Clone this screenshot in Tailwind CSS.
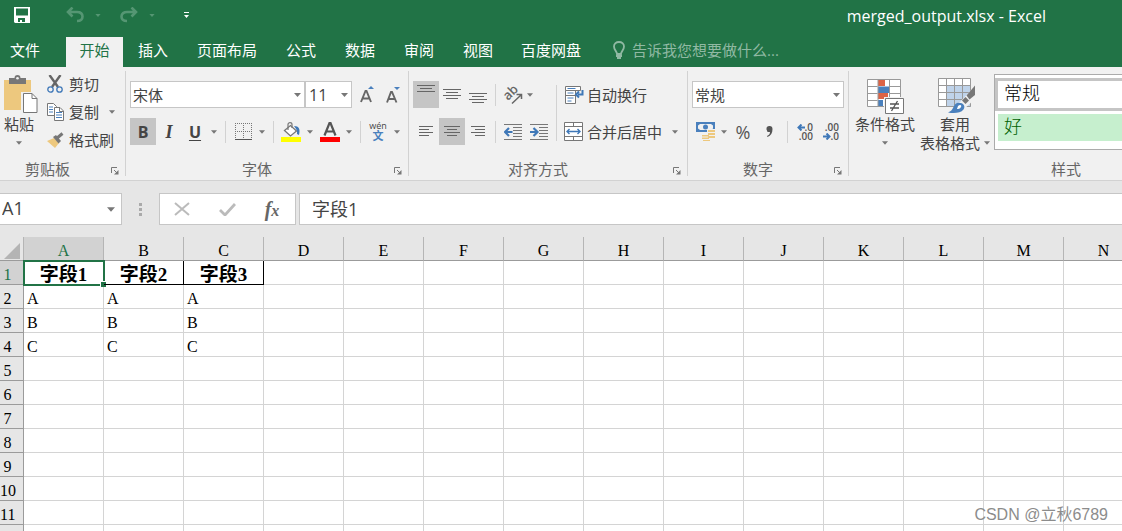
<!DOCTYPE html>
<html lang="zh-CN">
<head>
<meta charset="utf-8">
<meta name="viewport" content="width=device-width, initial-scale=1">
<title>merged_output.xlsx - Excel</title>
<script src="https://cdn.jsdelivr.net/npm/@tailwindcss/browser@4"></script>
</head>
<body class="relative flex h-screen flex-col overflow-hidden bg-white font-['Open_Sans','Noto_Sans_CJK_SC',sans-serif] text-[15px] leading-5 text-[#444444]">

<svg class="hidden" aria-hidden="true">
  <symbol id="caret" viewBox="0 0 7 4"><path d="M0 0h7L3.500 4z" fill="currentColor"/></symbol>
  <symbol id="launch" viewBox="0 0 8 8"><path d="M.5 6V.5H6M3 3l3.500 3.500" fill="none" stroke="#777"/><path d="M7.500 3v4.500H3z" fill="#777"/></symbol>
</svg>

<header class="shrink-0 bg-[#217346] text-white">
  <div class="flex h-[37px] items-center">
    <div class="flex flex-1 items-center pb-[7px]">
      <button class="ml-[13px] flex h-6 w-[18px] items-center justify-center" aria-label="保存">
        <svg class="h-4 w-4" viewBox="0 0 16 16"><path fill="#fff" fill-rule="evenodd" d="M0 0h16v16H1l-1-1zM2 1.500v7h12v-7zM4 11v4h2v-2h2v2h3v-4z"/></svg>
      </button>
      <button class="ml-[34px] flex h-6 w-5 items-center justify-center text-[#559673]" aria-label="撤消">
        <svg class="h-4 w-[18px]" viewBox="0 0 18 16"><path d="M6.500.5 2 5l4.500 4.500M2 5h9c3 0 5.500 1.500 5.500 4.500S14 14 11 14" fill="none" stroke="currentColor" stroke-width="2.600"/></svg>
      </button>
      <button class="ml-px flex h-6 w-6 items-center justify-center text-[#559673]" aria-label="撤消选项"><svg class="h-[3px] w-[6px]"><use href="#caret"/></svg></button>
      <button class="ml-[9px] flex h-6 w-5 items-center justify-center text-[#559673]" aria-label="恢复">
        <svg class="h-4 w-[18px]" viewBox="0 0 18 16"><path d="M11.500.5 16 5l-4.500 4.500M16 5H7C4 5 1.500 6.500 1.500 9.500S4 14 7 14" fill="none" stroke="currentColor" stroke-width="2.600"/></svg>
      </button>
      <button class="ml-px flex h-6 w-6 items-center justify-center text-[#559673]" aria-label="恢复选项"><svg class="h-[3px] w-[6px]"><use href="#caret"/></svg></button>
      <button class="ml-[14px] flex h-6 w-4 items-center justify-center" aria-label="自定义快速访问工具栏">
        <svg class="h-[6px] w-[5px]" viewBox="0 0 5 6"><path d="M0 0h5v1H0zM0 3h5L2.500 6z" fill="#fff"/></svg>
      </button>
    </div>
    <h1 class="pr-[76px] pb-[6px] text-base leading-5">merged_output.xlsx - Excel</h1>
  </div>
  <nav class="flex h-[30px] items-center pb-[4px]" aria-label="功能区选项卡">
    <button class="w-[50px]">文件</button>
    <button class="ml-4 -mb-[4px] h-[30px] w-[57px] bg-[#f1f1f1] pb-[4px] text-[#217346]">开始</button>
    <div class="ml-[15px] flex gap-[29px]">
      <button>插入</button>
      <button>页面布局</button>
      <button>公式</button>
      <button>数据</button>
      <button>审阅</button>
      <button>视图</button>
      <button class="-ml-px">百度网盘</button>
    </div>
    <label class="ml-8 flex items-center gap-[7px]">
      <svg class="h-[18px] w-3" viewBox="0 0 12 18" aria-hidden="true"><path d="M4 13c0-3-3-3.500-3-7.500C1 2.800 3.200 1 6 1s5 1.800 5 4.500c0 4-3 4.500-3 7.500z" fill="none" stroke="#90b9a3" stroke-width="1.800"/><path d="M3 14h6v2H8v2H4v-2H3z" fill="#90b9a3"/></svg>
      <input class="w-[160px] bg-transparent placeholder:text-[#90b9a3] placeholder:opacity-100 focus:outline-none" placeholder="告诉我您想要做什么..." aria-label="告诉我您想要做什么">
    </label>
  </nav>
</header>

<section class="flex h-[114px] shrink-0 border-b border-[#d2d2d2] bg-[#f1f1f1] pt-1 pb-[4px]" aria-label="开始">

  <!-- Clipboard -->
  <div class="flex w-[126px] shrink-0 flex-col border-r border-[#d2d2d2]">
    <div class="flex h-[88px] shrink-0">
      <button class="flex w-[38px] flex-col items-center pt-[4px]">
        <svg class="h-[39px] w-[34px] translate-x-[2px]" viewBox="0 0 34 39" aria-hidden="true"><path fill="#edc87e" d="M0 5h27v30H0z"/><path fill="#777" d="M5 3h5.500a3 3 0 0 1 6 0H22v6H5z"/><circle cx="13.500" cy="3.200" r="1.300" fill="#f1f1f1"/><path d="M18.500 18.500h9l6 6v13h-15z" fill="#fff" stroke="#f1f1f1" stroke-width="3"/><path d="M19.500 18.500h8.500l5 5v14H19.500z" fill="#fff" stroke="#777"/><path d="M28 18.500v5h5" fill="none" stroke="#777"/></svg>
        <span>粘贴</span>
        <svg class="mt-[7px] h-[4px] w-[6px] text-[#777]"><use href="#caret"/></svg>
      </button>
      <div class="flex flex-col gap-[2px] pl-[9px]">
        <button class="flex h-[26px] items-center gap-[6px]"><svg class="h-[18px] w-4" viewBox="0 0 16 18" aria-hidden="true"><path d="M2.500 0 11 12M13.500 0 5 12" stroke="#666" stroke-width="2.400"/><circle cx="3.500" cy="14.500" r="2.700" fill="#f1f1f1" stroke="#3f78b8" stroke-width="1.300"/><circle cx="12.500" cy="14.500" r="2.700" fill="#f1f1f1" stroke="#3f78b8" stroke-width="1.300"/></svg>剪切</button>
        <div class="flex h-[26px] items-center"><button class="flex items-center gap-[5px]"><svg class="h-[18px] w-[17px]" viewBox="0 0 17 18" aria-hidden="true"><path d="M.5.5h6l3 3v9h-9z" fill="#fff" stroke="#777"/><path d="M2 4h4M2 6.500h4M2 9h4" stroke="#4a80bd"/><path d="M7.500 4.500h5.500l3.500 3.500v9.500h-9z" fill="#fff" stroke="#777"/><path d="M12.500 5v3.500H16" fill="none" stroke="#777"/><path d="M9 9.500h6M9 12h6M9 14.500h6" stroke="#4a80bd"/></svg>复制</button><button class="ml-[10px] text-[#777]" aria-label="复制选项"><svg class="h-[4px] w-[6px]"><use href="#caret"/></svg></button></div>
        <button class="flex h-[26px] items-center gap-[5px]"><svg class="h-4 w-[17px]" viewBox="0 0 17 16" aria-hidden="true"><path d="m0 9 7-3 5 5-4 5z" fill="#edc87e"/><path d="m6 5 3-2 5 6-2.500 2.500z" fill="#777"/><path d="m9.500 6.500 6-5" stroke="#777" stroke-width="3"/></svg>格式刷</button>
      </div>
    </div>
    <div class="flex h-5 shrink-0 items-center text-[#666]"><span class="flex-1 pl-[25px]">剪贴板</span><button class="mr-[6px]" aria-label="剪贴板设置"><svg class="mt-1 h-2 w-2"><use href="#launch"/></svg></button></div>
  </div>

  <!-- Font -->
  <div class="flex w-[283px] shrink-0 flex-col border-r border-[#d2d2d2]">
    <div class="flex h-[88px] shrink-0 flex-col gap-[10px] pt-[10px] pl-1">
      <div class="flex h-[27px]">
        <div class="relative w-[175px]"><select class="h-[27px] w-full appearance-none border border-[#c6c6c6] bg-white pl-[2px]" aria-label="字体"><option>宋体</option></select><svg class="pointer-events-none absolute top-[12px] right-[4px] h-[4px] w-[7px] text-[#777]"><use href="#caret"/></svg></div>
        <div class="relative w-[47px]"><select class="h-[27px] w-full appearance-none border border-[#c6c6c6] bg-white pl-[3px] text-base" aria-label="字号"><option>11</option></select><svg class="pointer-events-none absolute top-[12px] right-[4px] h-[4px] w-[7px] text-[#777]"><use href="#caret"/></svg></div>
        <button class="ml-[2px] flex w-[26px] items-center justify-center" aria-label="增大字号"><svg class="h-[18px] w-[15px]" viewBox="0 0 15 18"><path d="M1 16 5.500 5h1L11 16M2.700 12.500h6.600" fill="none" stroke="#666" stroke-width="1.900"/><path d="M8 3h6l-3-3z" fill="#4a80bd"/></svg></button>
        <button class="flex w-[26px] items-center justify-center" aria-label="减小字号"><svg class="h-[18px] w-[15px]" viewBox="0 0 15 18"><path d="M1 16.500 5 6h1l4.500 10.500M2.600 13h6.300" fill="none" stroke="#666" stroke-width="1.900"/><path d="M8 1h6l-3 3z" fill="#4a80bd"/></svg></button>
      </div>
      <div class="flex h-[27px] items-center text-[#444]">
        <button class="h-[27px] w-[26px] bg-[#c5c5c5] text-base font-bold" aria-label="加粗">B</button>
        <button class="w-[26px] font-['Liberation_Serif',serif] text-lg font-bold italic" aria-label="倾斜">I</button>
        <button class="w-[26px] text-base font-bold text-[#444] underline underline-offset-2" aria-label="下划线">U</button>
        <button class="flex w-3 justify-center text-[#777]" aria-label="下划线选项"><svg class="h-[4px] w-[6px]"><use href="#caret"/></svg></button>
        <span class="mx-[5px] h-[22px] w-px bg-[#d2d2d2]"></span>
        <button class="flex w-6 justify-center" aria-label="边框"><svg class="h-[17px] w-[17px]" viewBox="0 0 17 17"><path d="M0 .5h17M0 8.500h17M.5 0v16M8.500 0v16M16.500 0v16" stroke="#777" stroke-dasharray="1 1" fill="none"/><path d="M0 16.500h17" stroke="#555"/></svg></button>
        <button class="flex w-[14px] justify-center text-[#777]" aria-label="边框选项"><svg class="h-[4px] w-[6px]"><use href="#caret"/></svg></button>
        <span class="mx-1 h-[22px] w-px bg-[#d2d2d2]"></span>
        <button class="flex w-[26px] justify-center" aria-label="填充颜色"><svg class="h-5 w-5" viewBox="0 0 20 20"><path d="M0 15h20v5H0z" fill="#ff0"/><path d="m3.500 8.500 6-5 6 5.500-6 5z" fill="#fff" stroke="#777" stroke-width="1.300"/><path d="M7 8V2.500C7 0 11 0 11 2.500V6" fill="none" stroke="#777" stroke-width="1.200"/><path d="M13 4c5 0 6.500 3 5 9l-2-1c.500-4-1-5-3-8z" fill="#3f78b8"/></svg></button>
        <button class="flex w-3 justify-center text-[#777]" aria-label="填充颜色选项"><svg class="h-[4px] w-[6px]"><use href="#caret"/></svg></button>
        <button class="flex w-7 justify-center" aria-label="字体颜色"><svg class="h-5 w-5" viewBox="0 0 20 20"><path d="m4.500 13.500 5-12.500h1l5 12.500M6.500 9.500h7" fill="none" stroke="#555" stroke-width="2.200"/><path d="M0 15h20v5H0z" fill="red"/></svg></button>
        <button class="flex w-[10px] justify-center text-[#777]" aria-label="字体颜色选项"><svg class="h-[4px] w-[6px]"><use href="#caret"/></svg></button>
        <span class="mx-[6px] h-[22px] w-px bg-[#d2d2d2]"></span>
        <button class="flex w-[22px] flex-col items-center" aria-label="拼音"><span class="text-[9px] leading-[8px]">wén</span><span class="text-[11px] leading-[12px] font-bold text-[#4a80bd]">文</span></button>
        <button class="flex w-4 justify-center text-[#777]" aria-label="拼音选项"><svg class="h-[4px] w-[6px]"><use href="#caret"/></svg></button>
      </div>
    </div>
    <div class="flex h-5 shrink-0 items-center text-[#666]"><span class="flex-1 pr-[6px] text-center">字体</span><button class="mr-[6px]" aria-label="字体设置"><svg class="mt-1 h-2 w-2"><use href="#launch"/></svg></button></div>
  </div>

  <!-- Alignment -->
  <div class="flex w-[279px] shrink-0 flex-col border-r border-[#d2d2d2]">
    <div class="flex h-[88px] shrink-0 pt-[10px] pl-1">
      <div class="flex w-[143px] flex-col gap-[10px]">
        <div class="flex h-[27px] items-center">
          <button class="flex h-[27px] w-[26px] justify-center bg-[#c5c5c5] pt-1" aria-label="顶端对齐"><svg class="h-[8px] w-[18px]" viewBox="0 0 18 8"><path d="M0 .5h18M3 3.500h12M0 6.500h18" stroke="#666"/></svg></button>
          <button class="flex w-[26px] justify-center" aria-label="垂直居中"><svg class="h-[11px] w-[18px]" viewBox="0 0 18 11"><path d="M0 .5h18M3 3.500h12M0 6.500h18M3 9.500h12" stroke="#666"/></svg></button>
          <button class="flex h-[27px] w-[26px] items-end justify-center pb-[4px]" aria-label="底端对齐"><svg class="h-[11px] w-[18px]" viewBox="0 0 18 11"><path d="M0 .5h18M3 3.500h12M0 6.500h18M3 9.500h12" stroke="#666"/></svg></button>
          <span class="mx-1 h-[22px] w-px bg-[#d2d2d2]"></span>
          <button class="flex w-[26px] justify-center" aria-label="方向"><svg class="h-[18px] w-5 overflow-visible" viewBox="0 0 20 18"><text x="0" y="0" transform="translate(5 15) rotate(-45)" font-family="Open Sans" font-size="13" font-weight="600" fill="#666">ab</text><path d="M9 17.500 18 9M13.500 8.500h5V13" fill="none" stroke="#666" stroke-width="1.500"/></svg></button>
          <button class="flex w-2 justify-center text-[#777]" aria-label="方向选项"><svg class="h-[4px] w-[6px]"><use href="#caret"/></svg></button>
        </div>
        <div class="flex h-[27px] items-center">
          <button class="flex w-[26px] justify-center" aria-label="左对齐"><svg class="h-[11px] w-[14px]" viewBox="0 0 14 11"><path d="M0 .5h14M0 3.500h10M0 6.500h14M0 9.500h10" stroke="#666"/></svg></button>
          <button class="flex h-[27px] w-[26px] items-center justify-center bg-[#c5c5c5]" aria-label="居中"><svg class="h-[11px] w-4" viewBox="0 0 16 11"><path d="M0 .5h16M3 3.500h10M0 6.500h16M3 9.500h10" stroke="#666"/></svg></button>
          <button class="flex w-[26px] justify-center" aria-label="右对齐"><svg class="h-[11px] w-[14px]" viewBox="0 0 14 11"><path d="M0 .5h14M4 3.500h10M0 6.500h14M4 9.500h10" stroke="#666"/></svg></button>
          <span class="mx-1 h-[22px] w-px bg-[#d2d2d2]"></span>
          <button class="flex w-[26px] justify-center" aria-label="减少缩进量"><svg class="h-4 w-[18px]" viewBox="0 0 18 16"><path d="M0 .5h18M9 3.500h9M9 6.500h9M9 9.500h9M9 12.500h9M0 15.500h18" stroke="#777"/><path d="M8.500 8H2M5 4 1 8l4 4" fill="none" stroke="#3f78b8" stroke-width="2.200"/></svg></button>
          <button class="flex w-[26px] justify-center" aria-label="增加缩进量"><svg class="h-4 w-[18px]" viewBox="0 0 18 16"><path d="M0 .5h18M9 3.500h9M9 6.500h9M9 9.500h9M9 12.500h9M0 15.500h18" stroke="#777"/><path d="M0 8h6.500M3.500 4l4 4-4 4" fill="none" stroke="#3f78b8" stroke-width="2.200"/></svg></button>
        </div>
      </div>
      <span class="mt-1 h-[56px] w-px bg-[#d2d2d2]"></span>
      <div class="flex flex-col gap-[10px] pl-[7px]">
        <button class="flex h-[27px] items-center gap-[3px]"><svg class="h-[18px] w-5" viewBox="0 0 20 18" aria-hidden="true"><path d="M1.500.5h15v4h-15zM1.500 4.500V17.500h10v-13M1.500 9.500h10" fill="#fff" stroke="#777"/><path d="M3.500 2.500h8M3.500 7h6M3.500 12h6M3.500 15h4" stroke="#4a80bd"/><path d="M18.500 4v4.500H14M15 5.500l-3 3 3 3" fill="none" stroke="#3f78b8" stroke-width="2"/></svg>自动换行</button>
        <div class="flex h-[27px] items-center"><button class="flex items-center gap-[4px]"><svg class="h-[19px] w-[19px]" viewBox="0 0 19 19" aria-hidden="true"><path d="M.5.5h18v18H.5zM.5 4.500h18M.5 14.500h18M9.500.5v4M9.500 14.500v4" fill="#fff" stroke="#777"/><path d="M3 9.500h13M5.500 7 3 9.500 5.500 12M13.500 7 16 9.500 13.500 12" fill="none" stroke="#3f78b8" stroke-width="1.400"/></svg>合并后居中</button><button class="ml-[10px] text-[#777]" aria-label="合并选项"><svg class="h-[4px] w-[6px]"><use href="#caret"/></svg></button></div>
      </div>
    </div>
    <div class="flex h-5 shrink-0 items-center text-[#666]"><span class="flex-1 pr-[6px] text-center">对齐方式</span><button class="mr-[6px]" aria-label="对齐设置"><svg class="mt-1 h-2 w-2"><use href="#launch"/></svg></button></div>
  </div>

  <!-- Number -->
  <div class="flex w-[161px] shrink-0 flex-col border-r border-[#d2d2d2]">
    <div class="flex h-[88px] shrink-0 flex-col gap-[10px] px-1 pt-[10px]">
      <div class="relative h-[27px]"><select class="h-[27px] w-full appearance-none border border-[#c6c6c6] bg-white pl-[2px]" aria-label="数字格式"><option>常规</option></select><svg class="pointer-events-none absolute top-[12px] right-[4px] h-[4px] w-[7px] text-[#777]"><use href="#caret"/></svg></div>
      <div class="flex h-[27px] items-center text-[#555]">
        <button class="flex w-[26px] justify-center" aria-label="会计数字格式"><svg class="h-[19px] w-[19px]" viewBox="0 0 19 19"><path d="M0 0h19v10H0z" fill="#4a80bd"/><path d="M2 3.500 4 2h11l2 1.500v3L15 8H4L2 6.500z" fill="#f1f1f1"/><circle cx="9.500" cy="5" r="2.500" fill="#4a80bd"/><path d="M11 7h8v9h-8zM6 12h8v7H6z" fill="#f1f1f1"/><path d="M12 8h7v2h-7zm0 3h7v2h-7zm0 3h7v2h-7zM6 13h7v1.500H6zm0 2.500h7V17H6zm1 2.500h7v1H7z" fill="#edc87e"/></svg></button>
        <button class="flex w-3 justify-center text-[#777]" aria-label="会计格式选项"><svg class="h-[4px] w-[6px]"><use href="#caret"/></svg></button>
        <button class="w-[26px] text-lg leading-5" aria-label="百分比样式">%</button>
        <button class="flex w-[26px] justify-center" aria-label="千位分隔样式"><svg class="h-[11px] w-[7px]" viewBox="0 0 7 11"><path d="M1 10c2-1 3-2 3-4A3 3 0 1 1 6.500 3c0 4-1.500 6.500-5 8z" fill="#555"/></svg></button>
        <span class="mr-1 ml-[5px] h-[22px] w-px bg-[#d2d2d2]"></span>
        <button class="flex w-[26px] flex-col items-end pr-[5px] text-[10px] leading-[9px] font-semibold" aria-label="增加小数位数"><span class="flex items-center"><svg class="h-[7px] w-2" viewBox="0 0 8 7"><path d="M8 3.500H2M4.500.5l-3 3 3 3" fill="none" stroke="#3f78b8" stroke-width="2"/></svg>.0</span><span>.00</span></button>
        <button class="flex w-[26px] flex-col items-end pr-[5px] text-[10px] leading-[9px] font-semibold" aria-label="减少小数位数"><span>.00</span><span class="flex items-center"><svg class="h-[7px] w-2" viewBox="0 0 8 7"><path d="M0 3.500h6M3.500.5l3 3-3 3" fill="none" stroke="#3f78b8" stroke-width="2"/></svg>.0</span></button>
      </div>
    </div>
    <div class="flex h-5 shrink-0 items-center text-[#666]"><span class="flex-1 pr-[6px] text-center">数字</span><button class="mr-[6px]" aria-label="数字设置"><svg class="mt-1 h-2 w-2"><use href="#launch"/></svg></button></div>
  </div>

  <!-- Styles -->
  <div class="flex min-w-0 flex-1 flex-col">
    <div class="flex h-[88px] shrink-0">
      <button class="ml-[3px] flex w-[66px] shrink-0 flex-col items-center pt-[8px]">
        <svg class="h-[35px] w-[37px]" viewBox="0 0 37 35" aria-hidden="true"><path d="M.5.5h33v27H.5z" fill="#fff"/><path d="M11 1h7v6h-7zM11 14h10v6H11z" fill="#dc6345"/><path d="M11 7.500h11V14H11zM11 21h5v6h-5z" fill="#4a80bd"/><path d="M.5.500h33v27H.5zM.5 7.500h10M.5 14.500h10M.5 21.500h10M22.500 7.500h11M22.500 14.500h11M11 .5v27M22.500 .5v27" fill="none" stroke="#999"/><path d="M17 18h20v17H17z" fill="#f1f1f1"/><path d="M18.500 19.500h18v15h-18z" fill="#fff" stroke="#777"/><path d="M23 25h9M23 29h9M30.500 22l-6 10" stroke="#555" stroke-width="1.300"/></svg>
        <span>条件格式</span>
        <svg class="mt-[7px] h-[4px] w-[6px] text-[#777]"><use href="#caret"/></svg>
      </button>
      <button class="ml-px flex w-[72px] shrink-0 flex-col items-center pt-[7px]">
        <svg class="ml-[2px] h-9 w-[37px]" viewBox="0 0 37 36" aria-hidden="true"><path d="M.5.500h32v28H.5z" fill="#fff"/><path d="M9 8h24v21H9z" fill="#bfd3ea"/><path d="M.5.500h32v28H.5zM.5 7.500h32M.5 14.500h32M.5 21.500h32M8.500 .5v28M16.500 .5v28M24.500 .5v28" fill="none" stroke="#999"/><path d="M10 35c6-1 5-10 12-11l16-17v13L25 32c-4 4-9 4-15 3z" fill="#f1f1f1"/><path d="M10 34.500c6-2 5-8 9-9.500 6-1 9 3 6.500 6.500-3 4-10 4-15.500 3z" fill="#4a80bd"/><path d="M20 28c2-2 4-1 3 1s-3 2-4 2" fill="#fff"/><path d="m24 22.500 3.500-3.500 3.500 3.500-3.500 3.500z" fill="#777"/><path d="m28.500 17.500 8.500-10V17l-5.500 4.500z" fill="#777"/></svg>
        <span class="leading-5">套用</span>
        <span class="-mt-px flex items-center gap-[4px] whitespace-nowrap">表格格式<svg class="h-[4px] w-[6px] text-[#777]"><use href="#caret"/></svg></span>
      </button>
      <div class="mt-[3px] ml-[3px] h-[76px] flex-1 border border-r-0 border-[#ababab] bg-white pt-[3px] text-lg" role="group" aria-label="单元格样式">
        <button class="block h-[33px] w-full border-[3px] border-r-0 border-[#c5c5c5] bg-white pb-[3px] pl-[6px] text-left leading-6 font-light text-black">常规</button>
        <button class="mt-[3px] ml-[3px] block h-[27px] w-full bg-[#c6efce] pb-[3px] pl-[6px] text-left leading-6 font-light text-[#006100]">好</button>
      </div>
    </div>
    <div class="h-5 shrink-0 pl-[161px] text-center text-[#666]">样式</div>
  </div>
</section>

<section class="flex h-[56px] shrink-0 items-center bg-[#e6e6e6] text-lg" aria-label="编辑栏">
  <div class="relative w-[122px]"><input class="h-8 w-full border border-l-0 border-[#c6c6c6] bg-white pb-[2px] pl-[2px]" value="A1" aria-label="名称框"><svg class="pointer-events-none absolute top-[14px] right-[7px] h-[5px] w-[8px] text-[#777]"><use href="#caret"/></svg></div>
  <svg class="mx-[17px] h-[13px] w-[3px]" viewBox="0 0 3 13" aria-hidden="true"><path d="M0 0h3v3H0zM0 5h3v3H0zM0 10h3v3H0z" fill="#aaa"/></svg>
  <div class="flex h-8 w-[137px] items-center border border-[#c6c6c6] bg-white">
    <button class="flex w-11 justify-center" aria-label="取消"><svg class="h-[14px] w-4" viewBox="0 0 16 14"><path d="m1 1 14 12M15 1 1 13" stroke="#bbb" stroke-width="2"/></svg></button>
    <button class="flex w-[46px] justify-center" aria-label="输入"><svg class="h-[13px] w-[17px]" viewBox="0 0 17 13"><path d="m1 7 5 5L16 1" fill="none" stroke="#bbb" stroke-width="2.800"/></svg></button>
    <button class="w-11 font-['Liberation_Serif',serif] text-xl font-bold text-[#666] italic" aria-label="插入函数">f<span class="text-base">x</span></button>
  </div>
  <input class="ml-[3px] h-8 min-w-0 flex-1 border border-r-0 border-[#c6c6c6] bg-white pb-[2px] pl-3" value="字段1" aria-label="公式">
</section>

<main class="min-h-0 flex-1 overflow-hidden">
  <table class="w-[1144px] table-fixed border-separate border-spacing-0 font-['Liberation_Serif','Noto_Sans_CJK_SC',serif] text-base leading-[18px] text-black [&_td]:h-6 [&_td]:border-r [&_td]:border-b [&_td]:border-[#d4d4d4] [&_td]:p-0 [&_td]:pt-[5px] [&_td]:pl-[3px] [&_th]:h-6 [&_th]:border-r [&_th]:border-b [&_th]:border-[#b5b5b5] [&_th]:border-b-[#9b9b9b] [&_th]:bg-[#e6e6e6] [&_th]:p-0 [&_th]:pt-[5px] [&_th]:font-normal">
    <thead><tr id="columns"><th class="w-6"><svg class="ml-1 h-4 w-4" viewBox="0 0 16 16" aria-hidden="true"><path d="M16 0v16H0z" fill="#b4b4b4"/></svg></th></tr></thead>
    <tbody id="rows"></tbody>
  </table>
</main>

<div class="pointer-events-none absolute right-[14px] bottom-[6px] font-['Liberation_Sans','Noto_Sans_CJK_SC',sans-serif] text-base leading-5 text-[#8c8c8c]">CSDN @立秋6789</div>

<script>
  const letters = [...'ABCDEFGHIJKLMN'];
  const data = [['字段1', '字段2', '字段3'], ['A', 'A', 'A'], ['B', 'B', 'B'], ['C', 'C', 'C']];
  document.getElementById('columns').insertAdjacentHTML('beforeend', letters.map((l, i) =>
    `<th scope="col" class="${i ? '' : 'bg-[#d2d2d2]! text-[#217346]'}">${l}</th>`).join(''));
  const cursor = '<span class="pointer-events-none absolute -top-px -left-px -right-[2px] -bottom-[2px] border-2 border-[#217346]"><span class="absolute -right-[3px] -bottom-[3px] h-[6px] w-[6px] border-t border-l border-white bg-[#217346]"></span></span>';
  document.getElementById('rows').innerHTML = Array.from({ length: 12 }, (_, r) =>
    `<tr><th scope="row" class="pr-2! border-r-[#9b9b9b]! ${r ? '' : 'bg-[#d2d2d2]! text-[#217346]'}">${r + 1}</th>` +
    letters.map((_, c) => {
      const text = data[r]?.[c] ?? '';
      if (r === 0 && text) return `<td class="relative border-black! pl-0! text-center text-[19px] leading-[18px] font-bold">${text}${c ? '' : cursor}</td>`;
      return `<td>${text}</td>`;
    }).join('') + '</tr>').join('');
</script>
</body>
</html>
